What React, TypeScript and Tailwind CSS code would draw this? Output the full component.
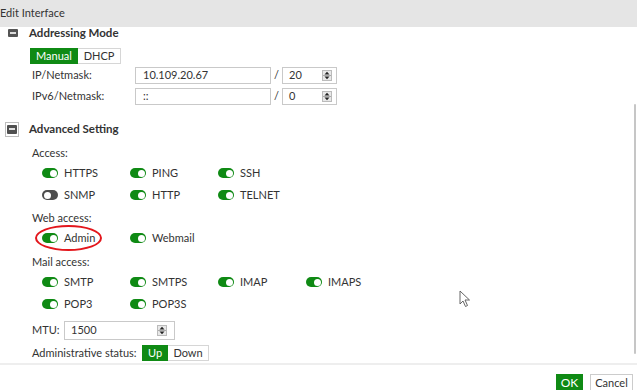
import type { ReactNode } from "react";

const GREEN = "bg-[#0f8a14]";

function Toggle({ on = true }: { on?: boolean }) {
  return (
    <span
      className={`relative inline-block h-[10px] w-[16px] shrink-0 rounded-full ${on ? GREEN : "bg-[#4d4d4d]"}`}
    >
      <span
        className={`absolute top-[1.5px] h-[7px] w-[7px] rounded-full bg-white ${on ? "right-[1.5px]" : "left-[1.5px]"}`}
      />
    </span>
  );
}

function ToggleItem({ label, on = true }: { label: string; on?: boolean }) {
  return (
    <div className="flex h-[22px] w-[88px] items-center gap-[6px]">
      <Toggle on={on} />
      <span>{label}</span>
    </div>
  );
}

function Spinner() {
  return (
    <svg width="10" height="11" viewBox="0 0 10 11" className="shrink-0">
      <rect x="0.5" y="0.5" width="9" height="10" fill="#e8e8e8" stroke="#bbb" />
      <line x1="1" y1="5.5" x2="9" y2="5.5" stroke="#aaa" />
      <path d="M5 1.8 L7.5 4.5 L2.5 4.5 Z" fill="#222" />
      <path d="M5 9.2 L7.5 6.5 L2.5 6.5 Z" fill="#222" />
    </svg>
  );
}

function Field({ value, className }: { value: string; className: string }) {
  return (
    <div className={`flex h-[17px] items-center border border-[#c9c9c9] bg-white pl-[7px] pr-[4px] ${className}`}>
      <span className="flex-1">{value}</span>
    </div>
  );
}

function NumField({ value, className }: { value: string; className: string }) {
  return (
    <div className={`flex items-center border border-[#c9c9c9] bg-white pl-[6px] pr-[4px] ${className}`}>
      <span className="flex-1">{value}</span>
      <Spinner />
    </div>
  );
}

function Section({ title, boxed, className }: { title: string; boxed?: boolean; className: string }) {
  return (
    <div className={`flex h-[20px] items-center ${className}`}>
      {boxed ? (
        <span className="ml-[5px] flex h-[15px] w-[14px] items-center justify-center border border-[#bdbdbd] bg-white">
          <span className="flex h-[9px] w-[10px] items-center justify-center rounded-[1px] bg-[#505050]">
            <span className="h-[2px] w-[6px] bg-[#e0e0e0]" />
          </span>
        </span>
      ) : (
        <span className="ml-[8px] mr-[1px] flex h-[8px] w-[10px] items-center justify-center rounded-[1px] bg-[#555]">
          <span className="h-[2px] w-[6px] bg-[#ddd]" />
        </span>
      )}
      <span className="ml-[10px] text-[11.5px] font-bold">{title}</span>
    </div>
  );
}

function Label({ children, className = "" }: { children: ReactNode; className?: string }) {
  return <div className={`flex h-[17px] items-center pl-[32px] ${className}`}>{children}</div>;
}

export default function App() {
  return (
    <div
      className="relative flex h-[390px] w-[637px] flex-col overflow-hidden bg-white text-[11px] text-[#333]"
      style={{ fontFamily: "Lato, 'Open Sans', sans-serif" }}
    >
      <header className="flex h-[27px] shrink-0 items-center bg-[#e5e5e5] text-[11px] text-[#333]">
        Edit Interface
      </header>

      <div className="relative h-[336px] shrink-0 overflow-hidden">
        <div className="-mt-[4px] flex flex-col">
          <Section title="Addressing Mode" className="" />

          <div className="ml-[30px] mt-[5px] flex h-[16px] w-fit">
            <span className={`flex w-[48px] items-center justify-center text-white ${GREEN}`}>Manual</span>
            <span className="flex w-[43px] items-center justify-center border border-l-0 border-[#d6d6d6]">DHCP</span>
          </div>

          <div className="mt-[3px] flex h-[17px] items-center pl-[32px]">
            <span className="w-[103px]">IP/Netmask:</span>
            <Field value="10.109.20.67" className="w-[136px]" />
            <span className="w-[11px] text-center">/</span>
            <NumField value="20" className="h-[17px] w-[55px]" />
          </div>
          <div className="mt-[4px] flex h-[17px] items-center pl-[32px]">
            <span className="w-[103px]">IPv6/Netmask:</span>
            <Field value="::" className="w-[136px]" />
            <span className="w-[11px] text-center">/</span>
            <NumField value="0" className="h-[17px] w-[55px]" />
          </div>

          <Section title="Advanced Setting" boxed className="mt-[14px]" />

          <Label className="mt-[6px]">Access:</Label>
          <div className="pl-[42px]">
            <div className="flex">
              <ToggleItem label="HTTPS" />
              <ToggleItem label="PING" />
              <ToggleItem label="SSH" />
            </div>
            <div className="flex">
              <ToggleItem label="SNMP" on={false} />
              <ToggleItem label="HTTP" />
              <ToggleItem label="TELNET" />
            </div>
          </div>

          <Label className="mt-[4px]">Web access:</Label>
          <div className="pl-[42px]">
            <div className="flex">
              <div className="relative">
                <ToggleItem label="Admin" />
                <span className="pointer-events-none absolute -left-[7px] -top-[2px] h-[26px] w-[67px] rounded-[50%] border-2 border-[#e3161c]" />
              </div>
              <ToggleItem label="Webmail" />
            </div>
          </div>

          <Label className="mt-[5px]">Mail access:</Label>
          <div className="pl-[42px]">
            <div className="flex">
              <ToggleItem label="SMTP" />
              <ToggleItem label="SMTPS" />
              <ToggleItem label="IMAP" />
              <ToggleItem label="IMAPS" />
            </div>
            <div className="flex">
              <ToggleItem label="POP3" />
              <ToggleItem label="POP3S" />
            </div>
          </div>

          <div className="mt-[6px] flex h-[19px] items-center pl-[32px]">
            <span className="w-[32px]">MTU:</span>
            <NumField value="1500" className="h-[19px] w-[111px] pr-[7px]" />
          </div>

          <div className="mt-[5px] flex h-[16px] items-center pl-[32px]">
            <span className="w-[110px] whitespace-nowrap">Administrative status:</span>
            <span className={`flex h-full w-[26px] items-center justify-center text-white ${GREEN}`}>Up</span>
            <span className="flex h-full w-[41px] items-center justify-center border border-l-0 border-[#d6d6d6]">Down</span>
          </div>
        </div>

        <span className="absolute right-[1px] top-[77px] h-[250px] w-[2px] rounded-full bg-[#c6c6c6]" />
        <svg className="absolute left-[459px] top-[263px]" width="12" height="18" viewBox="0 0 12 18">
          <path d="M1 1 L1 14 L4 11 L6.5 16.5 L8.5 15.5 L6 10 L10.5 10 Z" fill="white" stroke="#555" strokeWidth="0.9" />
        </svg>
      </div>

      <div className="flex flex-1 items-start justify-end gap-[7px] border-t-2 border-[#eeeeee] pr-[4px] pt-[9px]">
        <span className={`flex h-[18px] w-[27px] items-center justify-center text-[12px] text-white ${GREEN}`}>OK</span>
        <span className="flex h-[18px] w-[43px] items-center justify-center border border-[#ccc] text-[11px]">Cancel</span>
      </div>
    </div>
  );
}
